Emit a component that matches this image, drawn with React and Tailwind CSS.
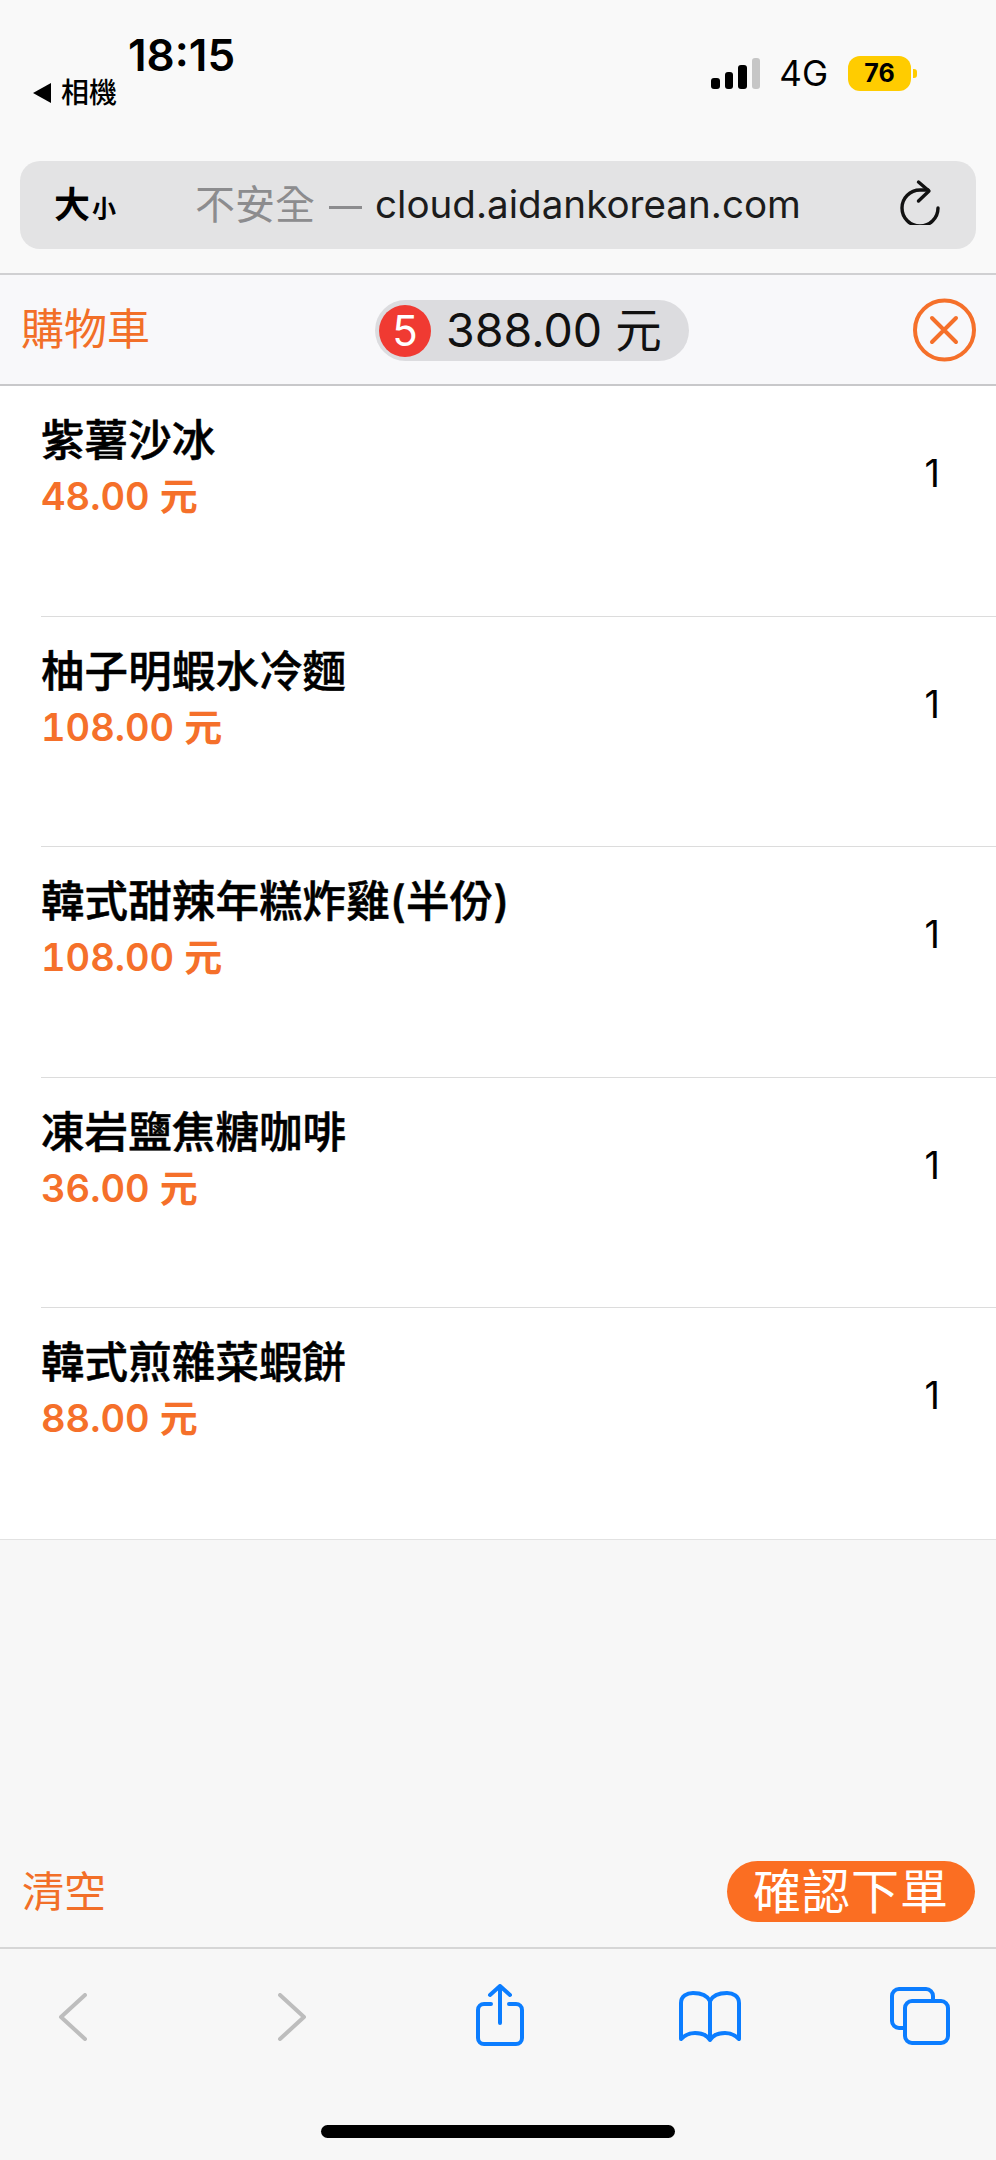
const SANS = "font-['Inter','Noto_Sans_CJK_TC',sans-serif]";

const items = [
  { name: '紫薯沙冰', price: '48.00 元' },
  { name: '柚子明蝦水冷麵', price: '108.00 元' },
  { name: '韓式甜辣年糕炸雞(半份)', price: '108.00 元' },
  { name: '凍岩鹽焦糖咖啡', price: '36.00 元' },
  { name: '韓式煎雜菜蝦餅', price: '88.00 元' },
];

function Row({ item, last }) {
  return (
    <div className="h-[230.6px] pl-[41px] flex">
      <div className={`flex-1 flex justify-between pr-[56px] pt-[26px] ${last ? '' : 'border-b-[1.5px] border-[#dcdcdc]'}`}>
        <div>
          <div className="text-[43.5px] leading-[56px] font-medium [-webkit-text-stroke:0.5px_black] text-black tracking-[0.1px] whitespace-nowrap">{item.name}</div>
          <div className="text-[38px] leading-[50px] mt-[3px] font-semibold tabular-nums text-[#f5702a] whitespace-nowrap">{item.price}</div>
        </div>
        <div className="text-[38px] leading-[46px] text-black mt-[38px]">1</div>
      </div>
    </div>
  );
}

export default function App() {
  return (
    <div className={`${SANS} w-[996px] h-[2160px] bg-[#f7f7f7] flex flex-col overflow-hidden`}>
      {/* status bar */}
      <div className="h-[161px] bg-[#f9f9f9] flex justify-between items-start">
        <div className="pl-[32px] pt-[31px]">
          <div className="pl-[96px] text-[44px] leading-[48px] font-semibold text-black">18:15</div>
          <div className="flex items-center gap-[9px] mt-[-2px]">
            <svg width="20" height="22" viewBox="0 0 20 22"><path d="M1 11 19 1v20z" fill="#000" /></svg>
            <span className="text-[28px] leading-[32px] font-medium text-black">相機</span>
          </div>
        </div>
        <div className="flex items-center pt-[56px] pr-[79px]">
          <div className="flex items-end gap-[5px] h-[31px]">
            <div className="w-[8.5px] h-[11px] bg-black rounded-[3px]" />
            <div className="w-[8.5px] h-[17px] bg-black rounded-[3px]" />
            <div className="w-[8.5px] h-[24px] bg-black rounded-[3px]" />
            <div className="w-[8.5px] h-[31px] bg-[#c6c6c6] rounded-[3px]" />
          </div>
          <span className="ml-[19px] text-[35px] leading-[35px] text-black">4G</span>
          <div className="ml-[20px] w-[63px] h-[35px] bg-[#ffcc00] rounded-[12px] flex items-center justify-center text-[25px] font-bold text-black">76</div>
          <div className="ml-[2px] w-[4px] h-[9px] bg-[#ffcc00] rounded-r-[3px]" />
        </div>
      </div>

      {/* address bar */}
      <div className="h-[114px] bg-[#f9f9f9] px-[20px] border-b-2 border-[#d0d0d2]">
        <div className="h-[88px] bg-[#e3e3e4] rounded-[20px] flex items-center pl-[34px] pr-[36px]">
          <span className="text-[36px] font-semibold text-black leading-none">大</span>
          <span className="text-[24px] font-semibold text-black leading-none ml-[2px] mt-[8px]">小</span>
          <span className="ml-[79px] text-[40px] text-[#8c8c8e] whitespace-nowrap">不安全</span>
          <span className="ml-[14px] w-[33px] h-[3px] bg-[#8c8c8e] mt-[4px]" />
          <span className="ml-[13px] text-[38.6px] text-[#1c1c1c] whitespace-nowrap">cloud.aidankorean.com</span>
          <svg className="ml-auto mt-[-6px]" width="40" height="46" viewBox="0 0 40 46" fill="none" stroke="#111" strokeWidth="3.4" strokeLinecap="round" strokeLinejoin="round">
            <path d="M38 29A18 18 0 1 1 20 11h8" />
            <path d="M18.5 3 29 12 18.500 22" />
          </svg>
        </div>
      </div>

      {/* cart header */}
      <div className="h-[111px] bg-[#f8f8fa] border-b-2 border-[#c8c8ca] pl-[21px] pr-[20px] flex items-center justify-between relative">
        <span className="text-[43px] text-[#f26f28] leading-none">購物車</span>
        <div className="absolute left-[375px] top-[25px] w-[314px] h-[61px] bg-[#dcdcdf] rounded-full flex items-center pl-[4px]">
          <div className="w-[52px] h-[52px] rounded-full bg-[#f03a32] flex items-center justify-center text-white text-[42px] leading-none">5</div>
          <span className="ml-[15px] text-[46.500px] text-[#111] leading-none whitespace-nowrap">388.00 元</span>
        </div>
        <svg width="63" height="64" viewBox="0 0 63 64" fill="none" stroke="#f5702a" strokeWidth="4" strokeLinecap="round">
          <circle cx="31.5" cy="32" r="29.5" />
          <path d="M19 20 43 44M43 20 19 44" />
        </svg>
      </div>

      {/* list */}
      <div className="bg-white border-b-[1.5px] border-[#e2e2e2]">
        {items.map((item, i) => (
          <Row key={item.name} item={item} last={i === items.length - 1} />
        ))}
      </div>

      {/* cart footer */}
      <div className="flex-1 flex items-end justify-between pl-[22px] pr-[21px] pb-[25px]">
        <span className="text-[42px] text-[#f26f28] leading-[61px]">清空</span>
        <button className="w-[248px] h-[61px] rounded-full bg-[#fb6e22] text-white text-[48px] tracking-[1px] leading-none whitespace-nowrap">確認下單</button>
      </div>

      {/* safari toolbar */}
      <div className="h-[213px] border-t-2 border-[#d6d6d6] bg-[#f7f7f7] flex flex-col">
        <div className="flex items-start justify-between pt-[36px] pl-[58px] pr-[46px] h-[176px]">
          <svg className="mt-[8px]" width="30" height="48" viewBox="0 0 30 48" fill="none" stroke="#bdbdbd" strokeWidth="4" strokeLinecap="round" strokeLinejoin="round"><path d="M27 2 3 24l24 22" /></svg>
          <svg className="mt-[8px] ml-[188px]" width="30" height="48" viewBox="0 0 30 48" fill="none" stroke="#bdbdbd" strokeWidth="4" strokeLinecap="round" strokeLinejoin="round"><path d="M3 2l24 22L3 46" /></svg>
          <svg className="ml-[168px] mt-[-1px]" width="48" height="62" viewBox="0 0 48 62" fill="none" stroke="#0b7dff" strokeWidth="4" strokeLinecap="round" strokeLinejoin="round">
            <path d="M15 20H8a6 6 0 0 0-6 6v28a6 6 0 0 0 6 6h32a6 6 0 0 0 6-6V26a6 6 0 0 0-6-6h-7" />
            <path d="M24 39V2M14 11l10-9 10 9" />
          </svg>
          <svg className="ml-[155px] mt-[6px]" width="62" height="52" viewBox="0 0 62 52" fill="none" stroke="#0b7dff" strokeWidth="4" strokeLinecap="round" strokeLinejoin="round">
            <path d="M31 10C28 4 21 2 14 2 8 2 2 5 2 12v36c5-5 9-6 14-6 6 0 12 2 15 7 3-5 9-7 15-7 5 0 9 1 14 6V12c0-7-6-10-12-10-7 0-14 2-17 8ZM31 10v39" />
          </svg>
          <svg className="ml-[148px] mt-[2px]" width="60" height="58" viewBox="0 0 60 58" fill="none" stroke="#0b7dff" strokeWidth="4" strokeLinejoin="round">
            <path d="M14 41H9a7 7 0 0 1-7-7V9a7 7 0 0 1 7-7h27a7 7 0 0 1 7 7v5" />
            <rect x="15" y="14" width="43" height="42" rx="7" />
          </svg>
        </div>
        <div className="flex justify-center">
          <div className="w-[354px] h-[13px] bg-black rounded-full" />
        </div>
      </div>
    </div>
  );
}
